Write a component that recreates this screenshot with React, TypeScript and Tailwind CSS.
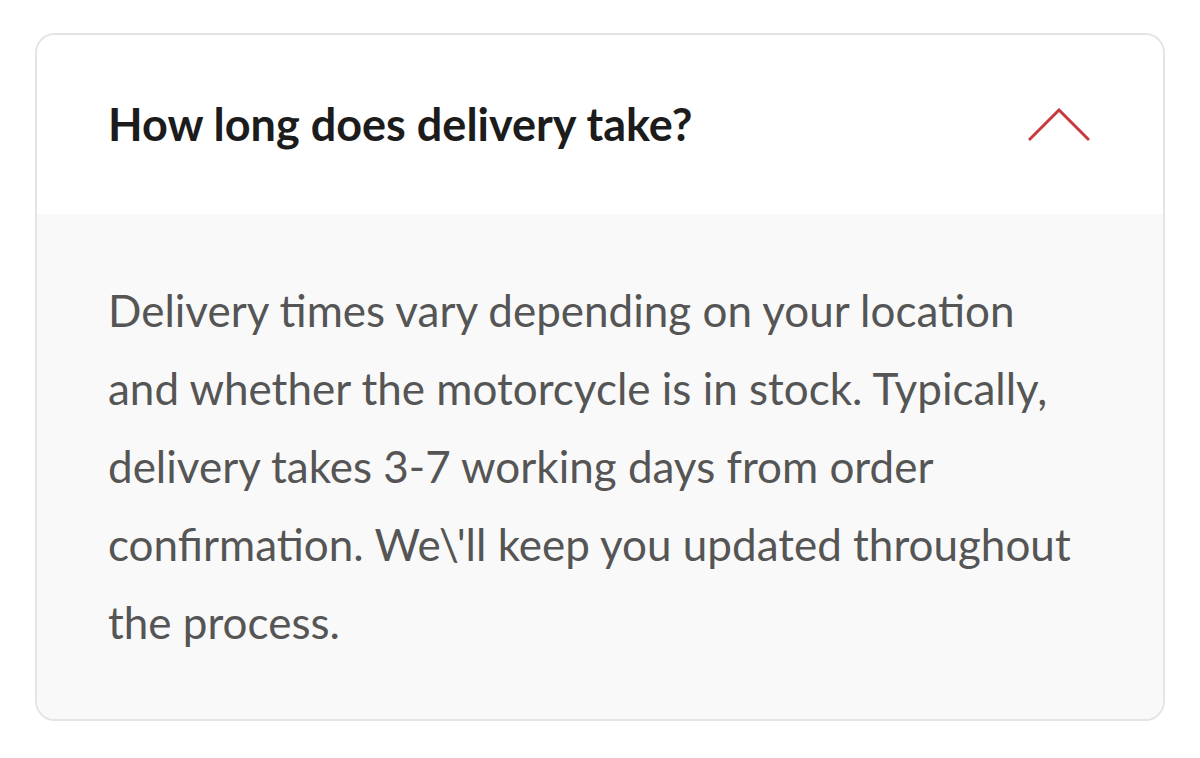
export default function App() {
  return (
    <div className="min-h-[758px] bg-white pt-[33px] px-[35px] font-['Lato',sans-serif]">
      <div className="w-[1130px] rounded-[20px] border-2 border-[#e4e4e4] overflow-hidden">
        <div className="h-[179px] flex items-center justify-between pl-[71px] pr-[72px] bg-white">
          <h3 className="text-[45px] font-bold text-[#1c1c1c]">
            How long does delivery take?
          </h3>
          <svg width="62" height="34" viewBox="0 0 62 34" fill="none" className="mr-[1px]">
            <path d="M1 32 L31 2 L61 32" stroke="#c8383d" strokeWidth="3" />
          </svg>
        </div>
        <div className="bg-[#f9f9f9] pl-[71px] pr-[80px] pt-[57px] pb-[58px]">
          <p className="text-[44px] leading-[78px] text-[#555555]">
            Delivery times vary depending on your location and whether the motorcycle is in stock. Typically, delivery takes 3-7 working days from order confirmation. We\'ll keep you updated throughout the process.
          </p>
        </div>
      </div>
    </div>
  );
}
